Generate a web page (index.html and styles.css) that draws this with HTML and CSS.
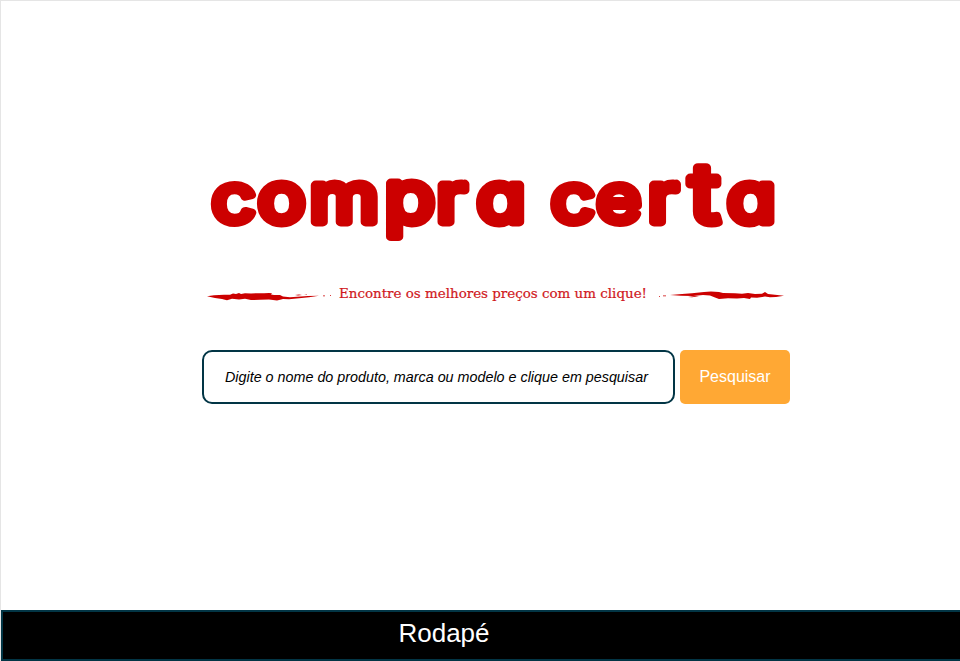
FILE: index.html
```html
<!DOCTYPE html>
<html lang="pt-BR">
<head>
<meta charset="utf-8">
<title>Compra Certa</title>
<link rel="stylesheet" href="styles.css">
</head>
<body>
<div class="page">
  <main class="content">
    <svg class="logo" width="600" height="175" viewBox="200 130 600 175" role="img" aria-label="compra certa">
      <text class="brand" transform="scale(1.15 1)" y="222" x="184 224.300 269.300 334.500 379.500 414.700 460 479 518.500 563.500 599.500 632.500"><tspan class="round">c</tspan>om<tspan class="deep">p</tspan>ra <tspan class="round">ce</tspan>r<tspan class="tall">t</tspan>a</text>
      <path class="brush" d="M207 296.300L214 295.200 224 294.800 230 294.700 233 293.500 236 294 239 293 241 294 245 293.300 251 293.500 256 293.200 264 293.200 269 292.900 272 293.300 271 294.500 274 295 280 295 283 296.500 290 297.200 297 296.800 308 296 319 295.800 309 297.200 299 298.200 289 299.200 283 299 277 300.500 269 299.500 260 299.800 251 300 245 298.800 239 299.500 232 298.700 227 300.300 222 299 215 298Z M295 295l4-.5 3 .5-4 .6zM304 294.500l3-.3v.6zM323 295.500h2v.7h-2zM330 295h1v.7h-1z"/>
      <path class="brush" d="M670 295L682 294 692 293.200 704 292 711 291.500 719 292 723 293 735 293.200 742 293.800 748 293 755 294 762 293.700 765 292 768 294 775 294.700 784 295.800 776 297 770 297.300 765 296.500 757 297.700 751 297.500 750 299 744 298 737 298.500 728 298.200 719 299 715 297.500 710 295.500 703 295 693 296 681 295.700Z M688 297l7-1 4 .3-7 1zM659 296h1v.7h-1zM663 295.500h3v.7h-3z"/>
      <text class="tagline" x="339" y="298" textLength="308" lengthAdjust="spacingAndGlyphs">Encontre os melhores preços com um clique!</text>
    </svg>
    <form class="search">
      <input class="field" type="text" placeholder="Digite o nome do produto, marca ou modelo e clique em pesquisar">
      <button class="submit" type="button">Pesquisar</button>
    </form>
  </main>
  <footer class="footer">Rodapé</footer>
</div>
</body>
</html>
```
FILE: styles.css
```css
* { box-sizing: border-box; }
body { margin: 0; background: #fff; font-family: "Liberation Sans", Arial, sans-serif; overflow: hidden; }
.page { height: 661px; border: solid #e5e5e5; border-width: 1px 0 0 1px; display: flex; flex-direction: column; }
.content { flex: 1; padding: 129px 0 0 199px; }
.logo { display: block; overflow: visible; }
.brand { font: 400 68.5px Inter, sans-serif; font-feature-settings: "cv11"; fill: #c00; stroke: #c00; stroke-width: 8.8px; stroke-linejoin: round; }
.round { font-size: 67px; stroke-width: 8px; }
.deep { font-size: 71px; }
.tall { font-size: 80px; }
.tagline { font: 13px "DejaVu Serif", serif; fill: #d0181c; stroke: #d0181c; stroke-width: .2px; }
.brush { fill: #c00; }
.search { display: flex; gap: 5px; margin: 45px 0 0 2px; }
.field { width: 473px; height: 54px; border: 2px solid #023545; border-radius: 10px; padding: 0 21px; font: italic 14.33px "Liberation Sans", Arial, sans-serif; color: #000; background: #fff; }
.field::placeholder { color: #000; opacity: 1; }
.submit { width: 110px; height: 54px; padding: 0; border: 0; border-radius: 5px; background: #ffa834; color: #fff; font: 16px "Liberation Sans", Arial, sans-serif; }
.footer { height: 51px; margin-right: -2px; border: 2px solid #023545; background: #000; color: #fff; font-size: 26px; line-height: 43px; text-align: center; padding-right: 75px; }
```
